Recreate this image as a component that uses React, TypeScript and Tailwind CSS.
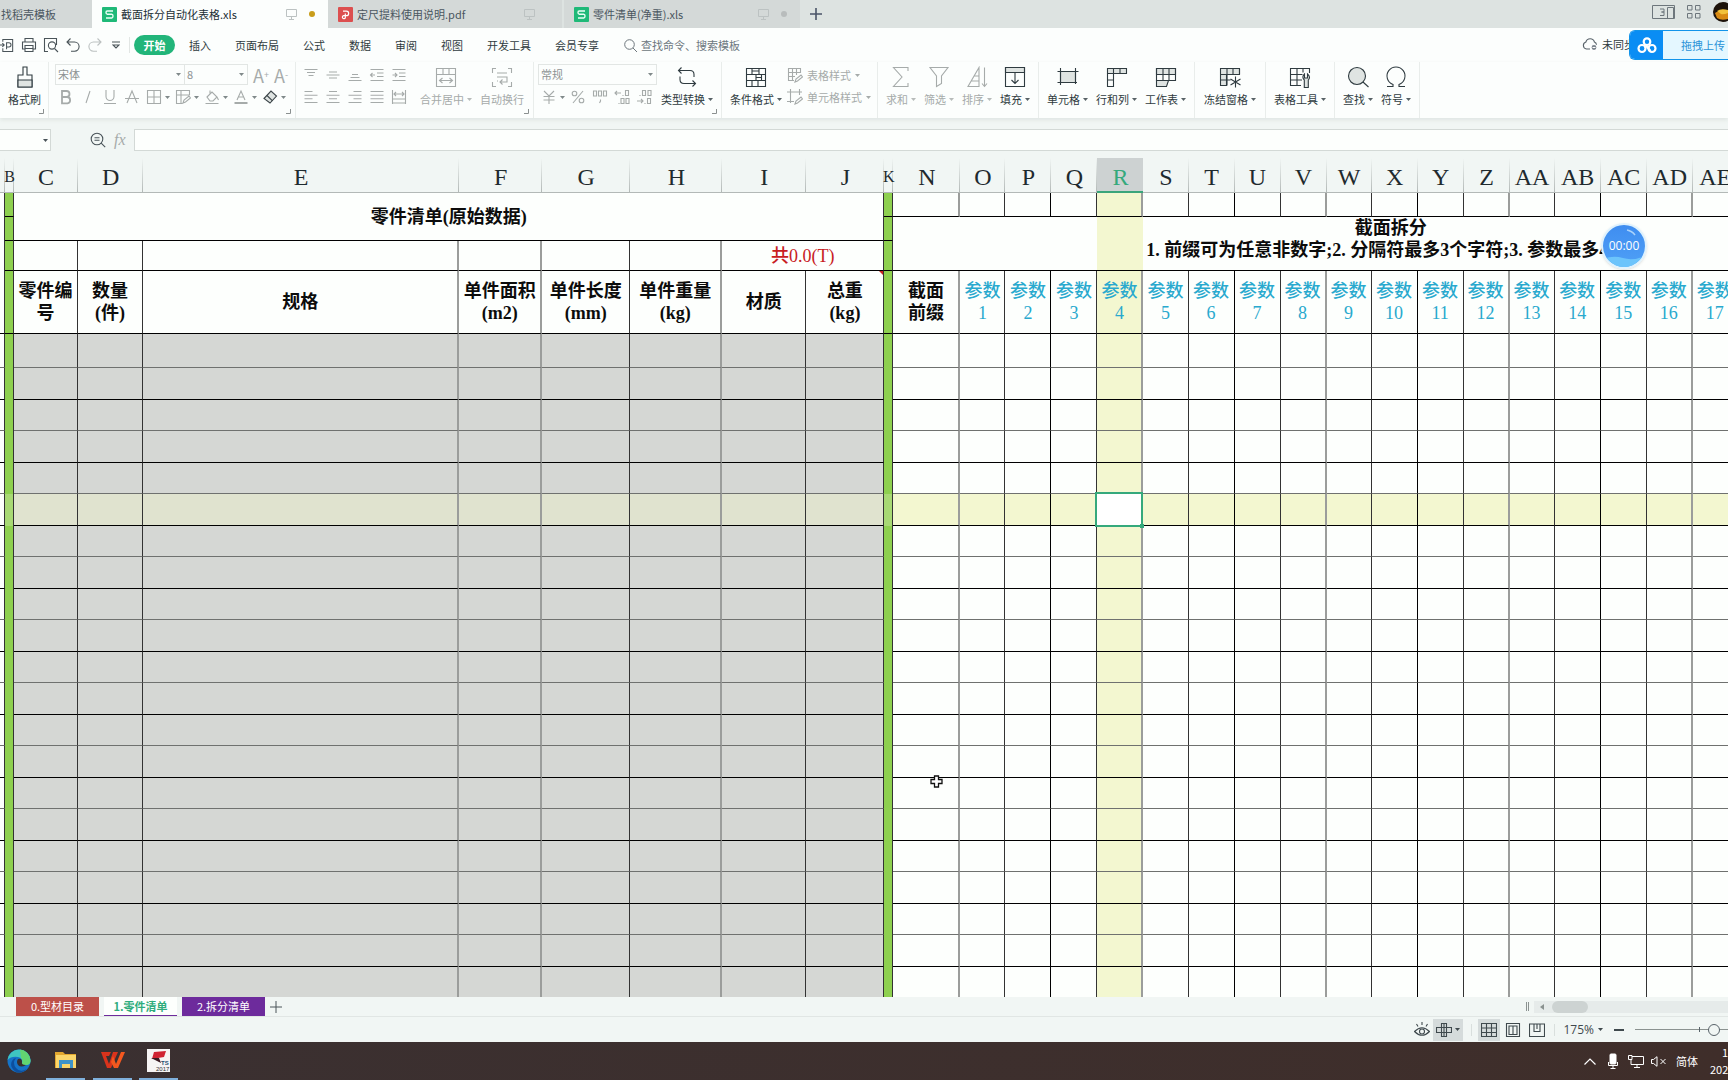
import type { ReactNode } from 'react';

type Column = {
  id: string;
  width: string;
  line: string;
  kind?: 'edge' | 'green' | 'gray';
};

const DARK = 'border-r border-r-[#333]';
const BLACK = 'border-r border-r-black';
const SOFT = 'border-r-2 border-r-[#9b9d9b]';

const COLUMNS: Column[] = [
  { id: 'A', width: 'w-[5px]', line: DARK, kind: 'edge' },
  { id: 'B', width: 'w-[9px]', line: DARK, kind: 'green' },
  { id: 'C', width: 'w-[64px]', line: DARK, kind: 'gray' },
  { id: 'D', width: 'w-[65px]', line: DARK, kind: 'gray' },
  { id: 'E', width: 'w-[316px]', line: SOFT, kind: 'gray' },
  { id: 'F', width: 'w-[83px]', line: SOFT, kind: 'gray' },
  { id: 'G', width: 'w-[88px]', line: DARK, kind: 'gray' },
  { id: 'H', width: 'w-[92px]', line: SOFT, kind: 'gray' },
  { id: 'I', width: 'w-[84px]', line: DARK, kind: 'gray' },
  { id: 'J', width: 'w-[78px]', line: DARK, kind: 'gray' },
  { id: 'K', width: 'w-[9px]', line: DARK, kind: 'green' },
  { id: 'N', width: 'w-[67px]', line: SOFT },
  { id: 'O', width: 'w-[45px]', line: DARK },
  { id: 'P', width: 'w-[46px]', line: BLACK },
  { id: 'Q', width: 'w-[46px]', line: DARK },
  { id: 'R', width: 'w-[46px]', line: SOFT },
  { id: 'S', width: 'w-[45px]', line: DARK },
  { id: 'T', width: 'w-[46px]', line: BLACK },
  { id: 'U', width: 'w-[46px]', line: DARK },
  { id: 'V', width: 'w-[46px]', line: SOFT },
  { id: 'W', width: 'w-[45px]', line: DARK },
  { id: 'X', width: 'w-[46px]', line: BLACK },
  { id: 'Y', width: 'w-[46px]', line: DARK },
  { id: 'Z', width: 'w-[46px]', line: SOFT },
  { id: 'AA', width: 'w-[45px]', line: DARK },
  { id: 'AB', width: 'w-[46px]', line: BLACK },
  { id: 'AC', width: 'w-[46px]', line: DARK },
  { id: 'AD', width: 'w-[46px]', line: SOFT },
  { id: 'AE', width: 'w-[45px]', line: DARK },
  { id: 'AF', width: 'w-[50px]', line: BLACK },
  { id: 'AG', width: 'w-[50px]', line: DARK },
  { id: 'AH', width: 'w-[50px]', line: SOFT },
];

const LEFT_HEADS: [string, string?][] = [
  ['零件编', '号'],
  ['数量', '(件)'],
  ['规格'],
  ['单件面积', '(m2)'],
  ['单件长度', '(mm)'],
  ['单件重量', '(kg)'],
  ['材质'],
  ['总重', '(kg)'],
];

const PARAM_COLUMNS = COLUMNS.slice(12);
const BODY_ROWS = Array.from({ length: 22 }, (_, i) => i);
const ACTIVE_COL = 'R';
const ACTIVE_ROW = 5;

function cellColor(col: Column, row: number) {
  const hot = row === ACTIVE_ROW;
  if (col.kind === 'green') return hot ? 'bg-[#a8d974]' : 'bg-[#8ed04f]';
  if (col.kind === 'gray') return hot ? 'bg-[#e0e3cf]' : 'bg-[#d5d7d4]';
  if (col.kind === 'edge') return 'bg-[#fdfffd]';
  return hot || col.id === ACTIVE_COL ? 'bg-[#f3f7d0]' : 'bg-[#fdfffd]';
}

function rowHeight(row: number) {
  if (row === 0) return 'h-[34px]';
  return row % 2 ? 'h-[32px]' : 'h-[31px]';
}

function Arrow({ className = '' }: { className?: string }) {
  return (
    <svg className={`h-[3px] w-[5px] shrink-0 ${className}`} viewBox="0 0 5 3" fill="currentColor">
      <path d="M0 0h5L2.5 3z" />
    </svg>
  );
}

function Icon({ children, className = 'size-[22px]', box = 22 }: { children: ReactNode; className?: string; box?: number }) {
  return (
    <svg
      className={`shrink-0 ${className}`}
      viewBox={`0 0 ${box} ${box}`}
      fill="none"
      stroke="currentColor"
      strokeWidth={1.1}
    >
      {children}
    </svg>
  );
}

function Group({ children, corner, className = 'gap-2 px-2' }: { children: ReactNode; corner?: boolean; className?: string }) {
  return (
    <div className={`relative flex shrink-0 border-r border-[#e9edeb] ${className}`}>
      {children}
      {corner && (
        <svg className="absolute right-1 bottom-1 size-[5px] text-[#8b9090]" viewBox="0 0 5 5" fill="none" stroke="currentColor">
          <path d="M4.5 0v4.5H0" />
        </svg>
      )}
    </div>
  );
}

function BigButton({ label, children, arrow = true, off }: { label: string; children: ReactNode; arrow?: boolean; off?: boolean }) {
  return (
    <button type="button" className={`flex shrink-0 flex-col items-center pt-1 ${off ? 'text-[#a6abaa]' : 'text-[#2f3b40]'}`}>
      <Icon>{children}</Icon>
      <span className="mt-1 flex items-center gap-[3px] text-[11px] leading-[14px] whitespace-nowrap">
        {label}
        {arrow && <Arrow className="opacity-80" />}
      </span>
    </button>
  );
}

function Tool({ label, children, arrow, dark }: { label: string; children: ReactNode; arrow?: boolean; dark?: boolean }) {
  return (
    <button
      type="button"
      aria-label={label}
      className={`flex h-5 shrink-0 items-center ${dark ? 'text-[#3c4549]' : 'text-[#a6abaa]'}`}
    >
      <span className="flex w-[22px] justify-center">
        <Icon className="size-4" box={16}>{children}</Icon>
      </span>
      {arrow && <Arrow className="mr-[2px] text-[#80898a]" />}
    </button>
  );
}

function Picker({ label, value, className }: { label: string; value: string; className: string }) {
  return (
    <div className={`relative h-[21px] border border-[#e2e6e4] ${className}`}>
      <select aria-label={label} className="block h-[19px] w-full appearance-none px-[2px] py-0 text-[11px] leading-[19px] text-[#8d9393]">
        <option>{value}</option>
      </select>
      <Arrow className="absolute top-2 right-[3px] text-[#80898a]" />
    </div>
  );
}

function SheetIcon() {
  return (
    <svg className="size-[15px] shrink-0" viewBox="0 0 15 15" fill="none">
      <rect width="15" height="15" rx="1" fill="#1fb978" />
      <path d="M11 4H5.2Q4 4 4 5.4T5.2 7.2H9.8Q11 7.2 11 9T9.8 11H4" stroke="#e9fff5" strokeWidth="1.4" />
    </svg>
  );
}

function PdfIcon() {
  return (
    <svg className="size-[15px] shrink-0" viewBox="0 0 15 15" fill="none">
      <rect width="15" height="15" rx="1" fill="#dc4f4f" />
      <path d="M5 4.2h3.4a2.2 2.2 0 0 1 0 4.500H5.600a1.500 1.500 0 1 0 1.700 2V6.500" stroke="#fff" strokeWidth="1.200" />
    </svg>
  );
}

function ScreenIcon() {
  return (
    <svg className="ml-auto h-3 w-[11px] shrink-0 text-[#bcc2c2]" viewBox="0 0 11 12" fill="none" stroke="currentColor">
      <path d="M.5 1.5h10v7H.5zM5.5 8.5v2.5M3 11.5h5" />
    </svg>
  );
}

function TabBar() {
  const tab = 'flex h-full w-[236px] shrink-0 items-center pl-[10px] text-[11px]';
  return (
    <div className="flex h-7 shrink-0 items-center bg-[#dde3e1] text-[#4a5660]">
      <button type="button" className="h-full w-[92px] shrink-0 bg-[#d4d9d8] pl-px text-left text-[11px]">找稻壳模板</button>
      <button type="button" className={`${tab} bg-[#fcfefd] text-[#222e35]`}>
        <SheetIcon />
        <span className="ml-1">截面拆分自动化表格.xls</span>
        <ScreenIcon />
        <span className="mr-[13px] ml-3 size-[6px] rounded-full bg-[#c99d1b]" />
      </button>
      <button type="button" className={`${tab} border-r-2 border-[#dde3e1] bg-[#d4d9d8]`}>
        <PdfIcon />
        <span className="ml-1">定尺提料使用说明.pdf</span>
        <ScreenIcon />
        <span className="mr-[9px] ml-3 size-[6px]" />
      </button>
      <button type="button" className={`${tab} bg-[#d4d9d8]`}>
        <SheetIcon />
        <span className="ml-1">零件清单(净重).xls</span>
        <ScreenIcon />
        <span className="mr-[13px] ml-3 size-[6px] rounded-full bg-[#b8bcbc]" />
      </button>
      <button type="button" aria-label="新建标签" className="ml-[10px]">
        <svg className="size-3" viewBox="0 0 12 12" stroke="#4a5468" strokeWidth="1.6"><path d="M6 0v12M0 6h12" /></svg>
      </button>
      <div className="ml-auto flex shrink-0 items-center gap-3 pb-1">
        <svg className="h-[14px] w-[23px]" viewBox="0 0 23 14" fill="none" stroke="#6d767c">
          <path d="M.5.5h22v13H.5zM15.500 2.500h6v11h-6z" />
          <path d="M8 4h4v3H9.500H12v3.500H8" />
        </svg>
        <svg className="size-[14px]" viewBox="0 0 14 14" fill="none" stroke="#6d767c">
          <path d="M.5.5h4.500v4.500H.5zM8.500.5H13v4.500H8.500zM.5 8.500H5V13H.5zM8.500 8.500H13V13H8.500z" />
        </svg>
        <svg className="h-5 w-[15px]" viewBox="0 0 15 20">
          <circle cx="10" cy="10" r="10" fill="#1d130b" />
          <path d="M2 11q4-3 13-2v8q-7 2-11-1z" fill="#d98a12" />
          <path d="M4 9q4-3 11-1v3q-5 2-7 1z" fill="#f2c23a" />
        </svg>
      </div>
    </div>
  );
}

const MENUS = ['插入', '页面布局', '公式', '数据', '审阅', '视图', '开发工具', '会员专享'];

function MenuBar() {
  return (
    <div className="relative flex h-[34px] shrink-0 items-center text-[11px] text-[#2f3b40]">
      <div className="flex w-[130px] shrink-0 items-center gap-[6px] border-r border-[#e2e6e4] pr-[9px] text-[#4a5459]">
        <button type="button" aria-label="输出为PDF">
          <Icon className="size-[15px]" box={16}>
            <path d="M3 4V1.500h10.500v13H3V11M0 7.500h4M2.500 5.500l2 2-2 2M7 12V5h2.500a2 2 0 0 1 0 4.500H7" />
          </Icon>
        </button>
        <button type="button" aria-label="打印">
          <Icon className="size-4" box={16}>
            <path d="M4 5V1.500h8V5M4 12H1.500V5h13v7H12M4 8.500h8v6H4zM4 11.500h8" />
          </Icon>
        </button>
        <button type="button" aria-label="打印预览">
          <Icon className="size-4" box={16}>
            <path d="M5 14.500H1.500v-13h12V8" />
            <circle cx="9" cy="8.500" r="3.600" />
            <path d="M11.500 11.500l3.500 3.500" />
          </Icon>
        </button>
        <button type="button" aria-label="撤销">
          <Icon className="size-4" box={16}>
            <path d="M5.500 1.500L2 5l3.500 3.500M2 5h7.500a4.600 4.600 0 0 1 0 9.200H6" />
          </Icon>
        </button>
        <button type="button" aria-label="恢复" className="text-[#bcc1c1]">
          <Icon className="size-4" box={16}>
            <path d="M10.500 1.500L14 5l-3.500 3.500M14 5H6.500a4.600 4.600 0 0 0 0 9.200H10" />
          </Icon>
        </button>
        <button type="button" aria-label="自定义快速访问" className="ml-auto">
          <Icon className="h-2 w-2" box={8}><path d="M0 1h8M1 4h6L4 7z" /></Icon>
        </button>
      </div>
      <button type="button" className="ml-1 h-5 w-[41px] shrink-0 rounded-full bg-[#22b57a] font-bold text-white">开始</button>
      <nav className="ml-[14px] flex shrink-0 gap-6">
        {MENUS.map(m => (
          <button key={m} type="button">{m}</button>
        ))}
      </nav>
      <label className="ml-[25px] flex items-center gap-1 text-[#6d767c]">
        <svg className="size-[13px]" viewBox="0 0 13 13" fill="none" stroke="currentColor">
          <circle cx="5.500" cy="5.500" r="4.800" />
          <path d="M9 9l4 4" />
        </svg>
        <input
          aria-label="搜索"
          placeholder="查找命令、搜索模板"
          className="w-[140px] outline-none placeholder:text-[#6d7780]"
        />
      </label>
      <button type="button" className="absolute top-2 right-[93px] flex items-center gap-1">
        <svg className="h-[14px] w-4" viewBox="0 0 16 14" fill="none" stroke="#59636a" strokeWidth="1.100">
          <path d="M8 12H4.500a3.600 3.600 0 0 1-.6-7A4.400 4.400 0 0 1 12.400 5a3 3 0 0 1 2 3" />
          <circle cx="12" cy="10.500" r="3" fill="#7a838b" stroke="#fff" />
          <path d="M10.500 10.500h3" stroke="#fff" />
        </svg>
        未同步
      </button>
      <button type="button" className="absolute top-[2px] right-0 flex h-[30px] w-[99px] overflow-hidden rounded-l-md border border-r-0 border-[#1294ea] bg-[#e4f7ff] text-[#2a93d8]">
        <span className="flex h-full w-[33px] shrink-0 items-center justify-center bg-[#0a8df4]">
          <svg className="h-[17px] w-5" viewBox="0 0 20 17" fill="none" stroke="#fff" strokeWidth="2.200">
            <circle cx="10" cy="4.700" r="3.300" />
            <circle cx="5" cy="11.500" r="3.500" />
            <circle cx="15" cy="11.500" r="3.500" />
            <path d="M8.500 8l5 6" />
          </svg>
        </span>
        <span className="ml-auto self-center pr-[3px] whitespace-nowrap">拖拽上传</span>
      </button>
    </div>
  );
}

function Ribbon() {
  return (
    <div className="flex h-14 shrink-0 overflow-hidden shadow-[0_2px_4px_#dfe5e2]">
      <Group corner className="pr-[7px] pl-2">
        <BigButton label="格式刷" arrow={false}>
          <path d="M9 1h4v8h5v12H4V9h5z" />
          <path d="M4 14h14v7H4z" fill="#dfe4e2" />
        </BigButton>
      </Group>

      <Group corner className="w-[247px] flex-col gap-[2px] pt-[2px] pl-[6px]">
        <div className="flex h-[21px] items-center">
          <Picker label="字体" value="宋体" className="w-[130px]" />
          <Picker label="字号" value="8" className="w-[63px] border-l-0" />
          <button type="button" className="ml-[5px] w-[21px] text-left text-lg leading-5 text-[#a6abaa]">A<sup className="text-[9px]">+</sup></button>
          <button type="button" className="w-[21px] text-left text-lg leading-5 text-[#a6abaa]">A<sup className="text-[9px]">-</sup></button>
        </div>
        <div className="flex">
          <Tool label="加粗"><path strokeWidth="1.800" d="M4 2h4.500a3 3 0 0 1 0 6H4zM4 8h5.500a3.200 3.200 0 0 1 0 6.300H4z" /></Tool>
          <Tool label="倾斜"><path d="M10 2L6 14" /></Tool>
          <Tool label="下划线"><path d="M4 1v6.500a4 4 0 0 0 8 0V1M2 14.500h12" /></Tool>
          <Tool label="删除线"><path d="M3 14L8 2l5 12M1 9.500h14" /></Tool>
          <Tool label="边框" arrow><path d="M1.500 1.500h13v13h-13zM8 1.500v13M1.500 8h13" /></Tool>
          <Tool label="绘图边框" arrow><path d="M8 14.500H1.500v-13h13V6M6 1.500v13M1.500 6h13M8 14l1-3 5-4 1.500 2-5 4z" /></Tool>
          <Tool label="填充颜色" arrow><path d="M3 8l5-5 5 5-4 4H6zM6 5V1.500M13 8l1.500 3M1.500 14.500h13" /></Tool>
          <Tool label="字体颜色" arrow><path d="M4 11l4-9 4 9M5.500 8h5" /><path strokeWidth="2" d="M1.500 14h13" /></Tool>
          <Tool label="清除" arrow dark><path fill="#dfe4e2" d="M2 9.500L9 2l5.500 5L8 14z" /><path d="M5 6.500l5.500 5.300" /></Tool>
        </div>
      </Group>

      <Group corner className="gap-2 pr-[9px] pl-1">
        <div className="mr-[2px] grid grid-cols-5 content-start gap-y-[2px] pt-[3px]">
          <Tool label="顶端对齐"><path d="M1.500 2.500h13M4 5.500h8M5.500 8.500h5" /></Tool>
          <Tool label="垂直居中"><path d="M4 5h8M1.500 8h13M4 11h8" /></Tool>
          <Tool label="底端对齐"><path d="M5 7.500h6M3.500 10.500h9M1.500 13.500h13" /></Tool>
          <Tool label="减少缩进"><path d="M1.500 2.500h13M8 6h6.500M8 9.500h6.500M1.500 13.500h13M1.500 8H6M3.500 6l-2 2 2 2" /></Tool>
          <Tool label="增加缩进"><path d="M1.500 2.500h13M8 6h6.500M8 9.500h6.500M1.500 13.500h13M1.500 8H6M4 6l2 2-2 2" /></Tool>
          <Tool label="左对齐"><path d="M1.500 2.500h8M1.500 6.200h13M1.500 9.800h8M1.500 13.500h13" /></Tool>
          <Tool label="居中"><path d="M4 2.500h8M1.500 6.200h13M4 9.800h8M1.500 13.500h13" /></Tool>
          <Tool label="右对齐"><path d="M6.500 2.500h8M1.500 6.200h13M6.500 9.800h8M1.500 13.500h13" /></Tool>
          <Tool label="两端对齐"><path d="M1.500 2.500h13M1.500 6.200h13M1.500 9.800h13M1.500 13.500h13" /></Tool>
          <Tool label="分散对齐"><path d="M1.500 1v14M14.500 1v14M1.500 14h13M1.500 10h13M3 5h10M5 3L3 5l2 2M11 3l2 2-2 2" /></Tool>
        </div>
        <BigButton label="合并居中" off>
          <path d="M1.500 2.500h19v18h-19zM1.500 8.500h19M8 2.500v6M14 2.500v6M4.500 14.500h13M7.500 12l-3 2.500 3 2.500M14.500 12l3 2.500-3 2.500" />
        </BigButton>
        <BigButton label="自动换行" off arrow={false}>
          <path d="M5 2.500H1.500V7M17 2.500h3.500V7M5 20.500H1.500V16M17 20.500h3.500V16M6 7h10M6 11h10v5H9M11.500 13.500L9 16l2.500 2.500M6 15h1" />
        </BigButton>
      </Group>

      <Group corner className="pr-2 pl-1">
        <div className="flex flex-col gap-[2px] pt-[2px]">
          <Picker label="数字格式" value="常规" className="w-[119px]" />
          <div className="flex">
            <Tool label="货币" arrow><path d="M3 2l5 5 5-5M8 7v8M2.500 7.500h11M2.500 11h11" /></Tool>
            <Tool label="百分比"><circle cx="4.500" cy="4.500" r="2.300" /><circle cx="11.500" cy="11.500" r="2.300" /><path d="M13 2L3 14" /></Tool>
            <Tool label="千位分隔"><path d="M1.500 2h3v5h-3zM6.500 2h3v5h-3zM11.500 2h3v5h-3zM8.500 10.500v1.500l-1 2" /></Tool>
            <Tool label="增加小数位"><path d="M1 4h6M3 2L1 4l2 2M9 6v1M11.500 1.500h3v5h-3zM5 14v1M7 9.500h3v5H7zM12 9.500h3v5h-3z" /></Tool>
            <Tool label="减少小数位"><path d="M1 12h6M5 10l2 2-2 2M9 14v1M11.500 9.500h3v5h-3zM4 6v1M6.500 1.500h3v5h-3zM12 1.500h3v5h-3z" /></Tool>
          </div>
        </div>
        <div className="ml-1 flex">
          <BigButton label="类型转换">
            <path d="M5.500 1.500L2.500 4.500l3 3M2.500 4.500H14q4 0 4 4v2.500M4 10.500v3q0 4 4 4H19.500M16.500 14.500l3 3-3 3" />
          </BigButton>
        </div>
      </Group>

      <Group className="gap-[5px] pr-[6px] pl-2">
        <BigButton label="条件格式">
          <path d="M1.500 2.500h19v18h-19z" />
          <path d="M1.500 8.500h19M1.500 14.500h19M7 2.500v6M14 2.500v6M11 8.500v6M16.500 8.500v6M7 14.500v6M13 14.500v6M7 5h7M11 11.500h5.500" />
        </BigButton>
        <div className="flex flex-col gap-[2px] pt-[3px] text-[11px] text-[#a6abaa]">
          <button type="button" className="flex h-5 items-center gap-1">
            <Icon className="size-4" box={16}><path d="M7 13.500H1.500v-12h12V6M5.500 1.500v12M9.500 1.500V8M1.500 5.500h12M1.500 9.500H8M8 15l1-3 5-4 1.500 2-5 4z" /></Icon>
            表格样式
            <Arrow />
          </button>
          <button type="button" className="flex h-5 items-center gap-1">
            <Icon className="size-4" box={16}><path d="M3.500 0v14M0 3h15M12.500 0v6M0 12.500h7M8 15l1-3 5-4 1.500 2-5 4z" /></Icon>
            单元格样式
            <Arrow />
          </button>
        </div>
      </Group>

      <Group>
        <BigButton label="求和" off><path d="M18 5V1.500H3.500L12 11l-8.500 9.500H18V17" /></BigButton>
        <BigButton label="筛选" off><path d="M2 1.500h18L13.500 10v7.500l-5 3V10z" /></BigButton>
        <BigButton label="排序" off><path d="M13 20.500V1.500L2 20.500zM8 10h5M5 15h8M18.500 1.500v19M16 17.500l2.500 3 2.500-3" /></BigButton>
        <BigButton label="填充">
          <path fill="#dfe4e2" d="M1.500 1.500h19v5h-19z" />
          <path d="M1.500 1.500h19v19h-19zM11 6.500v11M7.500 14l3.500 3.500 3.500-3.500" />
        </BigButton>
      </Group>

      <Group>
        <BigButton label="单元格">
          <path fill="#dfe4e2" d="M3.500 5.500h15v11h-15z" />
          <path d="M3.500 2v17M18.500 2v12.500M.5 5.500h21M.5 16.500h15M17 16.500h3M18.500 15v3" />
        </BigButton>
        <BigButton label="行和列">
          <path fill="#dfe4e2" d="M1.500 2.500h19v5h-19z" />
          <path d="M1.500 7.500v13h6v-18M1.500 14h6M14 2.500v5" />
        </BigButton>
        <BigButton label="工作表">
          <path fill="#dfe4e2" d="M1.500 2.500h19v6h-19zM1.500 14.500h12l-2 6h-10z" />
          <path d="M1.500 2.500h19v12h-19zM8 2.500v12M14 2.500v12M1.500 8.500h19" />
        </BigButton>
      </Group>

      <Group className="px-[9px]">
        <BigButton label="冻结窗格">
          <path fill="#dfe4e2" d="M1.500 2.500h19v6h-19zM1.500 8.500h6v11h-6z" />
          <path d="M8 2.500v17M14 2.500v6M1.500 14h10M20.500 8V3M16.500 10.500v11M11.500 13l10 6M21.500 13l-10 6" />
        </BigButton>
      </Group>

      <Group>
        <BigButton label="表格工具">
          <path d="M12 19.500H1.500v-17h19V7M8 2.500v17M14 2.500v4M1.500 8.500h12M1.500 14H13" />
          <path fill="#dfe4e2" d="M15.500 8v4h3V8q3.500 3 .8 6v7.500h-4V14q-3-3 .2-6z" />
        </BigButton>
      </Group>

      <Group>
        <BigButton label="查找">
          <circle cx="10" cy="10" r="8.500" fill="#dfe4e2" />
          <path d="M16 16l5.500 5" />
        </BigButton>
        <BigButton label="符号">
          <path d="M2 20.500h6v-2a9 9 0 1 1 6 0v2h6" />
        </BigButton>
      </Group>
    </div>
  );
}

function FormulaBar() {
  return (
    <div className="flex h-10 shrink-0 items-center pt-1 text-[#4a5459]">
      <div className="relative h-[22px] w-[51px] shrink-0 border border-l-0 border-[#d3d9d6] bg-[#fdfffd]">
        <input aria-label="名称框" className="h-full w-full outline-none" />
        <Arrow className="absolute top-[9px] right-[2px]" />
      </div>
      <button type="button" aria-label="查看公式" className="ml-[39px]">
        <Icon className="size-4" box={16}>
          <circle cx="7" cy="7" r="5.800" />
          <path d="M11.200 11.200l4 4M4.500 5.800h5M4.500 8.200h5" />
        </Icon>
      </button>
      <label htmlFor="formula" className="mx-2 font-['Liberation_Serif',serif] text-base text-[#a6abaa] italic">fx</label>
      <input id="formula" className="h-[22px] min-w-0 flex-1 border border-r-0 border-[#d3d9d6] bg-[#fdfffd] outline-none" />
    </div>
  );
}

function Grid() {
  return (
    <div className="min-h-0 flex-1 overflow-hidden bg-[#fdfffd]">
      <table className="w-[1888px] table-fixed border-separate border-spacing-0 text-center font-['Liberation_Serif','Noto_Sans_CJK_SC',serif] text-lg leading-[22px] text-[#0c0c0c]">
        <colgroup>
          {COLUMNS.map(c => <col key={c.id} className={c.width} />)}
        </colgroup>
        <thead>
          <tr className="h-[35px] bg-[#f1f6f4]">
            {COLUMNS.map(c => (
              <th
                key={c.id}
                scope="col"
                className={`p-0 font-normal ${c.kind === 'green' ? 'text-base' : 'text-2xl'} ${
                  c.id === ACTIVE_COL
                    ? 'border-b-2 border-[#3aa57b] bg-[#cdd2d2] text-[#35a97c]'
                    : 'border-b border-[#b3b9b7] bg-[linear-gradient(#f1f6f4,#b3b9b7)] bg-[length:1px_100%] bg-right bg-no-repeat text-[#1f2a2e]'
                }`}
              >
                <span className="flex justify-center pt-1 leading-7">{c.kind === 'edge' ? '' : c.id}</span>
              </th>
            ))}
          </tr>
        </thead>
        <tbody>
          <tr className="h-[24px]">
            <td className={DARK} />
            <td className={`border-b border-b-black bg-[#8ed04f] ${DARK}`} />
            <td colSpan={8} rowSpan={2} className="border-r border-b border-r-[#333] border-b-black p-0 font-bold">零件清单(原始数据)</td>
            <td className={`border-b border-b-black bg-[#8ed04f] ${DARK}`} />
            {COLUMNS.slice(11).map(c => (
              <td key={c.id} className={`border-b border-b-black ${c.line} ${cellColor(c, 0)}`} />
            ))}
          </tr>
          <tr className="h-[24px]">
            <td className={DARK} />
            <td className={`border-b border-b-black bg-[#8ed04f] ${DARK}`} />
            <td className={`border-b border-b-black bg-[#8ed04f] ${DARK}`} />
            <td colSpan={21} rowSpan={2} className="relative border-b border-black p-0 align-top font-bold">
              <span className="absolute inset-y-0 left-[204px] w-[46px] bg-[#f3f7d0]" />
              <span className="relative">
                截面拆分
                <br />
                1. 前缀可为任意非数字;2. 分隔符最多3个字符;3. 参数最多40个
              </span>
            </td>
          </tr>
          <tr className="h-[30px]">
            <td className={DARK} />
            <td className={`border-b border-b-black bg-[#8ed04f] ${DARK}`} />
            {COLUMNS.slice(2, 8).map(c => (
              <td key={c.id} className={`border-b border-b-black ${c.line}`} />
            ))}
            <td colSpan={2} className="border-r border-b border-r-[#333] border-b-black p-0 font-medium text-[#c8201f]">共0.0(T)</td>
            <td className={`border-b border-b-black bg-[#8ed04f] ${DARK}`} />
          </tr>
          <tr className="h-[63px]">
            <td className={`border-b border-b-black ${DARK}`} />
            <td className={`border-b border-b-black bg-[#8ed04f] ${DARK}`} />
            {LEFT_HEADS.map(([first, second], i) => (
              <td key={first} className={`relative border-b border-b-black p-0 font-bold ${COLUMNS[i + 2].line}`}>
                {first}
                {second && <><br />{second}</>}
                {i === 7 && <span className="absolute top-0 right-0 border-[2px] border-[#c8201f] border-b-transparent border-l-transparent" />}
              </td>
            ))}
            <td className={`border-b border-b-black bg-[#8ed04f] ${DARK}`} />
            <td className={`border-b border-b-black p-0 font-bold ${SOFT}`}>截面<br />前缀</td>
            {PARAM_COLUMNS.map((c, i) => (
              <td key={c.id} className={`border-b border-b-black p-0 font-medium text-[#29a9ce] ${c.line} ${cellColor(c, 0)}`}>
                参数<br />{i + 1}
              </td>
            ))}
          </tr>
          {BODY_ROWS.map(row => (
            <tr key={row} className={rowHeight(row)}>
              {COLUMNS.map(c => (
                <td
                  key={c.id}
                  className={`p-0 ${c.line} ${cellColor(c, row)} ${
                    c.kind === 'green' ? '' : row % 2 ? 'border-b border-b-black' : 'border-b border-b-[#6f716f]'
                  } ${c.id === ACTIVE_COL && row === ACTIVE_ROW ? 'relative' : ''}`}
                >
                  {c.id === ACTIVE_COL && row === ACTIVE_ROW && (
                    <span className="absolute -inset-0.5 border-2 border-[#35a97c] bg-white">
                      <span className="absolute -right-[3px] -bottom-[3px] size-1 bg-[#35a97c]" />
                    </span>
                  )}
                </td>
              ))}
            </tr>
          ))}
        </tbody>
      </table>
    </div>
  );
}

function SheetTabs() {
  return (
    <div className="flex h-5 shrink-0 items-center border-b border-[#e1e6e4] pl-4 text-[11px] text-white">
      <button type="button" className="h-full w-[83px] bg-[#bd5049]">0.型材目录</button>
      <button type="button" className="mr-[5px] ml-[5px] h-full w-[73px] border-b border-[#6d2b9c] bg-[#fdfffd] font-bold text-[#2fac7c]">1.零件清单</button>
      <button type="button" className="h-full w-[83px] bg-[#6d2b9c]">2.拆分清单</button>
      <button type="button" aria-label="新建工作表" className="ml-[5px]">
        <svg className="size-3" viewBox="0 0 12 12" stroke="#4a5459"><path d="M6 0v12M0 6h12" /></svg>
      </button>
      <div className="ml-auto flex w-[202px] items-center gap-[5px]">
        <svg className="h-[9px] w-[3px]" viewBox="0 0 3 9" stroke="#8b9290"><path d="M.5 0v9M2.500 0v9" /></svg>
        <div className="flex h-3 flex-1 items-center bg-[#e6ebea]">
          <svg className="ml-[6px] h-[6px] w-[4px]" viewBox="0 0 4 6" fill="#8b9290"><path d="M4 0v6L0 3z" /></svg>
          <div className="ml-2 h-3 w-9 rounded-full bg-[#cdd3d2]" />
        </div>
      </div>
    </div>
  );
}

function StatusBar() {
  return (
    <div className="flex h-[25px] shrink-0 items-center justify-end text-[#3f494d]">
      <button type="button" aria-label="护眼模式" className="mr-[3px]">
        <Icon className="size-4" box={16}>
          <path d="M.5 9.500Q8 2 15.500 9.500 8 17 .5 9.500zM8 0v3M2.500 2l1.500 2.500M13.500 2L12 4.500" />
          <circle cx="8" cy="9.500" r="2.500" />
        </Icon>
      </button>
      <button type="button" aria-label="阅读模式" className="flex h-[22px] w-[30px] items-center gap-[3px] bg-[#d5dbdb] pl-[3px]">
        <Icon className="size-4" box={16}><path d="M5.500 1.500h5v13h-5zM.5 5.500h15v5H.5zM8 1.500v13" /></Icon>
        <Arrow />
      </button>
      <span className="mr-[6px] ml-2 h-3 w-px bg-[#d9dfdd]" />
      <button type="button" aria-label="普通视图" className="flex size-[22px] items-center justify-center bg-[#d5dbdb]">
        <Icon className="size-4" box={16}><path d="M.5 1.500h15v13H.5zM.5 6h15M.5 10.500h15M5.500 1.500v13M10.500 1.500v13" /></Icon>
      </button>
      <button type="button" aria-label="页面布局" className="ml-[5px]">
        <Icon className="size-4" box={16}><path d="M1.500 1.500h13v13h-13zM4 4h8v8.500H4zM8 4v8.500" /></Icon>
      </button>
      <button type="button" aria-label="分页预览" className="ml-2">
        <Icon className="size-4" box={16}><path d="M.5 2h15v12.500H.5zM5 2v7.500h6V2M8 2v5" /></Icon>
      </button>
      <span className="mr-2 ml-[9px] h-3 w-px bg-[#d9dfdd]" />
      <button type="button" className="flex items-center gap-1 font-['Open_Sans',sans-serif] text-xs">
        175%
        <Arrow />
      </button>
      <button type="button" aria-label="缩小" className="ml-[11px] h-[2px] w-[10px] bg-[#3f494d]" />
      <div className="relative ml-[11px] flex w-[93px] items-center">
        <span className="absolute left-16 h-[5px] w-px bg-[#59636a]" />
        <input
          type="range"
          aria-label="缩放比例"
          defaultValue={90}
          className="h-3 w-full appearance-none bg-[linear-gradient(#8b9290,#8b9290)] bg-[length:100%_1px] bg-center bg-no-repeat [&::-webkit-slider-thumb]:size-3 [&::-webkit-slider-thumb]:appearance-none [&::-webkit-slider-thumb]:rounded-full [&::-webkit-slider-thumb]:border [&::-webkit-slider-thumb]:border-[#59636a] [&::-webkit-slider-thumb]:bg-[#f1f6f4]"
        />
      </div>
    </div>
  );
}

function Taskbar() {
  const app = 'flex h-full w-[39px] items-center justify-center border-b-2 border-[#7fb0dc]';
  return (
    <div className="flex h-[38px] shrink-0 items-center bg-linear-to-r from-[#3a3031] to-[#3f2e2a] text-white">
      <button type="button" aria-label="Edge" className="flex h-full w-[38px] items-center justify-center">
        <svg className="size-6" viewBox="0 0 24 24">
          <circle cx="12" cy="12" r="11.500" fill="#1573c8" />
          <path d="M.6 11A11.500 11.500 0 0 1 23.500 11q.5 5-5 5-4 0-3.500-2 1-5-4-6-7-1-10.400 3z" fill="#3fc6c0" />
          <path d="M13 .5a11.500 11.500 0 0 1 10.500 11q0 4.500-5 4.500-4 0-3.500-2 1.500-2-1-5z" fill="#62d671" />
          <path d="M9 9q-4 5 0 10t11 1a11.500 11.500 0 0 1-11 3Q2 18 5 12q1.500-3 4-3z" fill="#0d4f9e" />
          <path d="M11 10q4-1 4 3-1 3 4 3-5 3-8 0-2-3 0-6z" fill="#3a3031" />
        </svg>
      </button>
      <button type="button" aria-label="文件资源管理器" className={`${app} ml-2`}>
        <svg className="h-[18px] w-[22px]" viewBox="0 0 22 18">
          <path d="M0 1h8l2 2h11v14H0z" fill="#e3a72f" />
          <path d="M1 4h20v13H1z" fill="#fbd66b" />
          <path d="M4 17V9h14v8h-3v-4H7v4z" fill="#3e93c9" />
        </svg>
      </button>
      <button type="button" aria-label="WPS" className={`${app} ml-2`}>
        <svg className="h-[18px] w-6" viewBox="0 0 24 18">
          <path d="M0 1h10l-2 4H5l3 8L12 1h5l-7 16H6z" fill="#d9331c" />
          <path d="M12 5l3 8 5-12h4l-7 16h-4l-3-6z" fill="#f4581f" />
        </svg>
      </button>
      <button type="button" aria-label="Tekla 2017" className={`${app} ml-[7px]`}>
        <svg className="size-[23px]" viewBox="0 0 23 23">
          <path d="M0 0h23v23H0z" fill="#f6f4f4" />
          <path d="M7 3l12-1-2 6-12 2z" fill="#d02333" />
          <path d="M4 9l8 0 2 5z" fill="#3a1a22" />
          <text x="14" y="16" fontSize="6" fontWeight="bold" fill="#24506e" fontFamily="Liberation Sans">TS</text>
          <text x="9" y="22" fontSize="6" fill="#333" fontFamily="Liberation Sans">2017</text>
        </svg>
      </button>
      <div className="ml-auto flex items-center text-[11px]">
        <svg className="h-[7px] w-3" viewBox="0 0 12 7" fill="none" stroke="#fff" strokeWidth="1.200"><path d="M.5 6.500L6 1l5.500 5.500" /></svg>
        <svg className="ml-3 h-4 w-[10px]" viewBox="0 0 10 16" fill="none" stroke="#fff">
          <rect x="2" y="1" width="6" height="10" rx="1" fill="#fff" />
          <path d="M.5 9v3.500h9V9M5 12.500v3M2.500 15.500h5" />
        </svg>
        <svg className="ml-[10px] h-[13px] w-4" viewBox="0 0 16 13" fill="none" stroke="#fff">
          <path d="M4 1.500h11.500v8H3V5M.5.5h3.500v4H.5zM9 9.500v3M6 12.500h6" />
        </svg>
        <svg className="ml-[7px] h-[11px] w-[15px]" viewBox="0 0 15 11" fill="none" stroke="#fff">
          <path d="M.5 3.500h2L6 .7v9.600L2.500 7.500h-2zM9.500 3l5 5M14.500 3l-5 5" />
        </svg>
        <span className="ml-[10px]">简体</span>
        <time className="ml-3 w-[18px] text-right leading-[17px]">
          1
          <br />
          202
        </time>
      </div>
    </div>
  );
}

export default function App() {
  return (
    <div className="relative flex h-screen flex-col overflow-hidden bg-[#f1f6f4] font-['Noto_Sans_CJK_SC',sans-serif] whitespace-nowrap">
      <TabBar />
      <div className="z-10 shrink-0 bg-[#fcfefd]">
        <MenuBar />
        <Ribbon />
      </div>
      <FormulaBar />
      <Grid />
      <SheetTabs />
      <StatusBar />
      <Taskbar />

      {/* recording timer bubble */}
      <div className="absolute top-[223px] right-[81px] flex size-[46px] items-center justify-center overflow-hidden rounded-full border-2 border-[#dff2fd] bg-linear-to-b from-[#3f8df0] to-[#4fa0f6] text-xs text-white shadow">
        <svg className="absolute inset-0 size-full" viewBox="0 0 42 42" fill="none">
          <path d="M0 34q10-4 20-1t22-2v11H0z" fill="#6cc4fb" />
          <path d="M24 5q5 1 8 5" stroke="#a9d2fb" strokeWidth="1.500" />
        </svg>
        <span className="relative font-['Open_Sans',sans-serif]">00:00</span>
      </div>

      {/* cell cursor */}
      <svg className="absolute top-[775px] left-[930px] size-[13px]" viewBox="0 0 13 13" fill="#fff" stroke="#111" strokeWidth="1.300">
        <path d="M4.500 1h4v3.500H12v4H8.500V12h-4V8.500H1v-4h3.500z" />
      </svg>
    </div>
  );
}
